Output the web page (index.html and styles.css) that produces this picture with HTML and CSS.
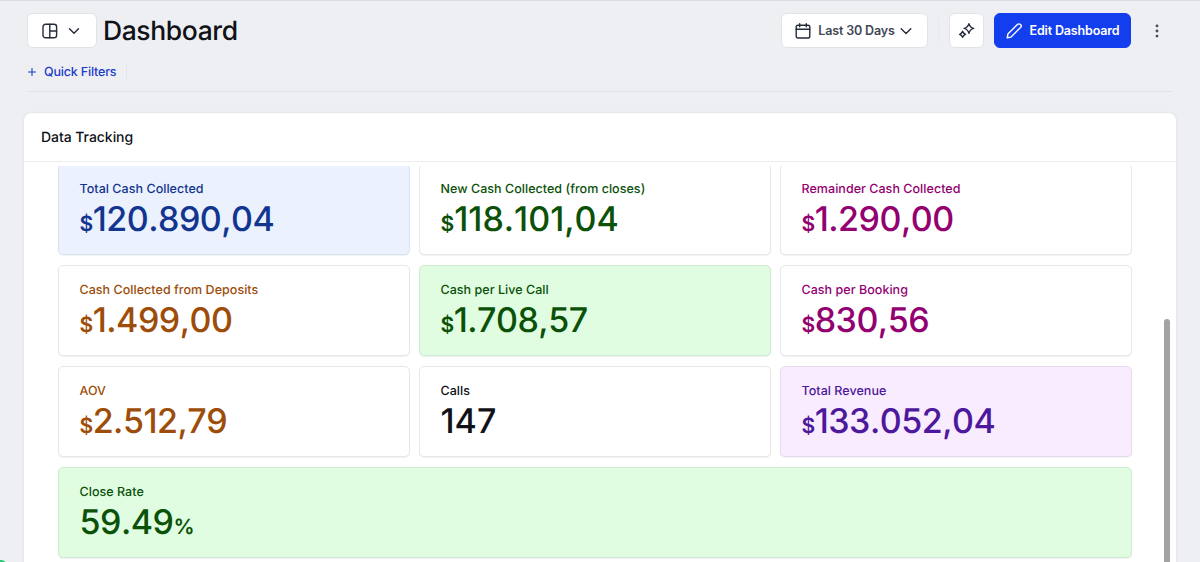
FILE: index.html
```
<!DOCTYPE html>
<html lang="en">
<head>
    <meta charset="UTF-8">
    <meta name="viewport" content="width=device-width, initial-scale=1.0">
    <title>Dashboard</title>
    <link rel="stylesheet" href="styles.css">
</head>
<body>
    <header class="topbar">
        <button class="btn btn-view" aria-label="Switch view">
            <svg width="16" height="16" viewBox="0 0 16 16"><rect x="1" y="1.2" width="13.6" height="13.6" rx="2.6"/><path d="M7.8 1.2v13.6M7.8 8h6.8"/></svg>
            <svg width="12" height="12" viewBox="0 0 12 12"><path d="M1.5 3.8 6 8.2l4.5-4.4"/></svg>
        </button>
        <h1>Dashboard</h1>
        <button class="btn btn-date">
            <svg width="16" height="16" viewBox="0 0 16 16"><rect x="1.2" y="2.2" width="13.6" height="12.8" rx="1.8"/><path d="M1.2 6.2h13.6M4.7.7v3M11.3.7v3"/></svg>
            <span>Last 30 Days</span>
            <svg width="12" height="12" viewBox="0 0 12 12"><path d="M1.2 3.8 6 8.4l4.8-4.6"/></svg>
        </button>
        <span class="divider"></span>
        <button class="btn btn-ai" aria-label="Insights">
            <svg width="18" height="18" viewBox="0 0 18 18"><path d="M10.9 1.6Q11.9 5.4 15.7 6.4 11.9 7.4 10.9 11.2 9.9 7.4 6.1 6.4 9.9 5.4 10.9 1.6ZM4.6 9.3Q5.3 11.6 7.6 12.3 5.3 13 4.6 15.3 3.9 13 1.6 12.3 3.9 11.6 4.6 9.3Z"/></svg>
        </button>
        <button class="btn btn-edit">
            <svg width="18" height="18" viewBox="0 0 18 18"><path d="m2.2 15.8.7-3.8L12.4 2.5a2.15 2.15 0 0 1 3.1 3.1L6 15.1Z"/></svg>
            <span>Edit Dashboard</span>
        </button>
        <button class="btn-more" aria-label="More">
            <svg width="4" height="14" viewBox="0 0 4 14"><circle cx="2" cy="1.9" r="1.4"/><circle cx="2" cy="7" r="1.4"/><circle cx="2" cy="12.1" r="1.4"/></svg>
        </button>
    </header>

    <div class="filters">
        <a class="quick-filters"><svg width="8" height="8" viewBox="0 0 8 8"><path d="M4 .5v7M.5 4h7"/></svg>Quick Filters</a>
        <span class="filters-end"></span>
    </div>

    <section class="panel">
        <h2>Data Tracking</h2>
        <div class="scroll-area">
            <div class="metrics">
                <div class="card blue filled">
                    <p class="label">Total Cash Collected</p>
                    <p class="value"><small>$</small>120.890,04</p>
                </div>
                <div class="card green">
                    <p class="label">New Cash Collected (from closes)</p>
                    <p class="value loose"><small>$</small>118.101,04</p>
                </div>
                <div class="card magenta">
                    <p class="label">Remainder Cash Collected</p>
                    <p class="value"><small>$</small>1.290,00</p>
                </div>
                <div class="card orange">
                    <p class="label">Cash Collected from Deposits</p>
                    <p class="value"><small>$</small>1.499,00</p>
                </div>
                <div class="card green filled">
                    <p class="label">Cash per Live Call</p>
                    <p class="value"><small>$</small>1.708,57</p>
                </div>
                <div class="card magenta">
                    <p class="label">Cash per Booking</p>
                    <p class="value"><small>$</small>830,56</p>
                </div>
                <div class="card orange">
                    <p class="label">AOV</p>
                    <p class="value"><small>$</small>2.512,79</p>
                </div>
                <div class="card">
                    <p class="label">Calls</p>
                    <p class="value loose">147</p>
                </div>
                <div class="card purple filled">
                    <p class="label">Total Revenue</p>
                    <p class="value"><small>$</small>133.052,04</p>
                </div>
                <div class="card green filled wide">
                    <p class="label">Close Rate</p>
                    <p class="value">59.49<small>%</small></p>
                </div>
            </div>
            <div class="scrollbar"></div>
        </div>
    </section>
    <span class="status-dot"></span>
</body>
</html>
```

FILE: styles.css
```
* {
    box-sizing: border-box;
}

body {
    font-family: Inter, "Liberation Sans", sans-serif;
    text-rendering: geometricPrecision;
    color: #101218;
    background: #eeeff3;
    margin: 0;
    height: 100vh;
    overflow: hidden;
    border-top: 1px solid #dcdde2;
    display: flex;
    flex-direction: column;
}

h1, h2, p {
    margin: 0;
}

svg {
    fill: none;
    stroke: currentColor;
    stroke-width: 1.4;
    stroke-linecap: round;
    stroke-linejoin: round;
    flex: none;
}

button {
    font-family: inherit;
    padding: 0;
}

/* top bar */
.topbar {
    display: flex;
    align-items: center;
    height: 35px;
    margin: 12px 0 0 27px;
}

.btn {
    display: flex;
    align-items: center;
    justify-content: center;
    height: 35px;
    background: #ffffff;
    color: #252b38;
    border: 1px solid #e1e3e8;
    border-radius: 6px;
    font-size: 12.5px;
    font-weight: 600;
    letter-spacing: -0.15px;
    white-space: nowrap;
}

.btn-view {
    width: 70px;
    gap: 10px;
    padding-right: 3px;
}

h1 {
    font-size: 26.5px;
    line-height: 35px;
    font-weight: 500;
    letter-spacing: -0.4px;
    margin-left: 6px;
    padding-top: 2px;
}

.btn-date {
    width: 147px;
    gap: 7px;
    margin-left: auto;
    padding-right: 2px;
    color: #414754;
}

.btn-date svg {
    color: #252b38;
}

.btn-date svg:last-child {
    margin-left: -2px;
}

.divider {
    width: 1px;
    height: 26px;
    background: #e8e9ee;
    margin: 0 10px;
}

.btn-ai {
    width: 35px;
}

.btn-edit {
    width: 137px;
    gap: 6px;
    margin-left: 10px;
    background: #123eee;
    border-color: #123eee;
    color: #ffffff;
}

.btn-more {
    width: 20px;
    height: 30px;
    margin: 0 33px 0 16px;
    border: 0;
    background: none;
    color: #454a58;
    display: flex;
    align-items: center;
    justify-content: center;
}

.btn-more svg {
    fill: currentColor;
    stroke: none;
}

/* filters */
.filters {
    display: flex;
    align-items: center;
    height: 44px;
    margin: 0 28px 0 27px;
    padding: 5px 0 0 1px;
    border-bottom: 1px solid #dfe1e5;
}

.quick-filters {
    display: flex;
    align-items: center;
    gap: 8px;
    color: #1c3cc8;
    font-size: 12.5px;
    font-weight: 500;
    letter-spacing: -0.18px;
}

.quick-filters svg {
    stroke-width: 1.1;
}

.filters-end {
    width: 1px;
    height: 15px;
    margin-left: 10px;
    background: #e4e5ea;
}

/* panel */
.panel {
    flex: 1;
    min-height: 0;
    margin: 21px 24px 0;
    background: #ffffff;
    border-radius: 7px 7px 0 0;
    box-shadow: 0 0 2px #cdd0d6;
    display: flex;
    flex-direction: column;
}

h2 {
    height: 49px;
    padding-left: 17px;
    border-bottom: 1px solid #eceef0;
    font-size: 14px;
    font-weight: 500;
    line-height: 50px;
    letter-spacing: -0.05px;
}

.scroll-area {
    flex: 1;
    min-height: 0;
    overflow: hidden;
    display: flex;
    align-items: flex-start;
    justify-content: space-between;
    margin-top: 4px;
    padding: 0 6px 0 34px;
}

.metrics {
    width: 1074px;
    margin-top: -2px;
    display: grid;
    grid-template-columns: repeat(3, 1fr);
    grid-auto-rows: 91px;
    row-gap: 10px;
    column-gap: 9px;
}

.card {
    padding: 16px 20.5px;
    border: 1px solid #e6e7e9;
    border-radius: 5px;
    background: #ffffff;
    box-shadow: 0 1px 1px rgba(20, 30, 50, 0.06);
}

.wide {
    grid-column: 1 / -1;
}

.label {
    font-size: 12.5px;
    font-weight: 500;
    line-height: 17px;
    letter-spacing: 0.04px;
}

.value {
    font-size: 34px;
    font-weight: 500;
    line-height: 44px;
    letter-spacing: -0.5px;
    font-kerning: none;
    white-space: nowrap;
}

.value.loose {
    letter-spacing: 0;
}

.value small {
    font-size: 21px;
    font-weight: 600;
}

.blue {
    color: #123690;
}

.blue.filled {
    background: #ecf1fe;
    border-color: #dbe3f2;
}

.green {
    color: #0b5108;
}

.green.filled {
    background: #e0fde1;
    border-color: #cdebd0;
}

.magenta {
    color: #930070;
}

.orange {
    color: #9d4d09;
}

.purple {
    color: #4d189b;
}

.purple.filled {
    background: #f9ecfe;
    border-color: #e8daed;
}

.scrollbar {
    width: 6px;
    height: 300px;
    margin-top: 153px;
    border-radius: 3px;
    background: #a3a3a3;
}

.status-dot {
    position: absolute;
    left: -7px;
    bottom: -13px;
    width: 15px;
    height: 15px;
    border-radius: 50%;
    background: #1fc673;
}
```
